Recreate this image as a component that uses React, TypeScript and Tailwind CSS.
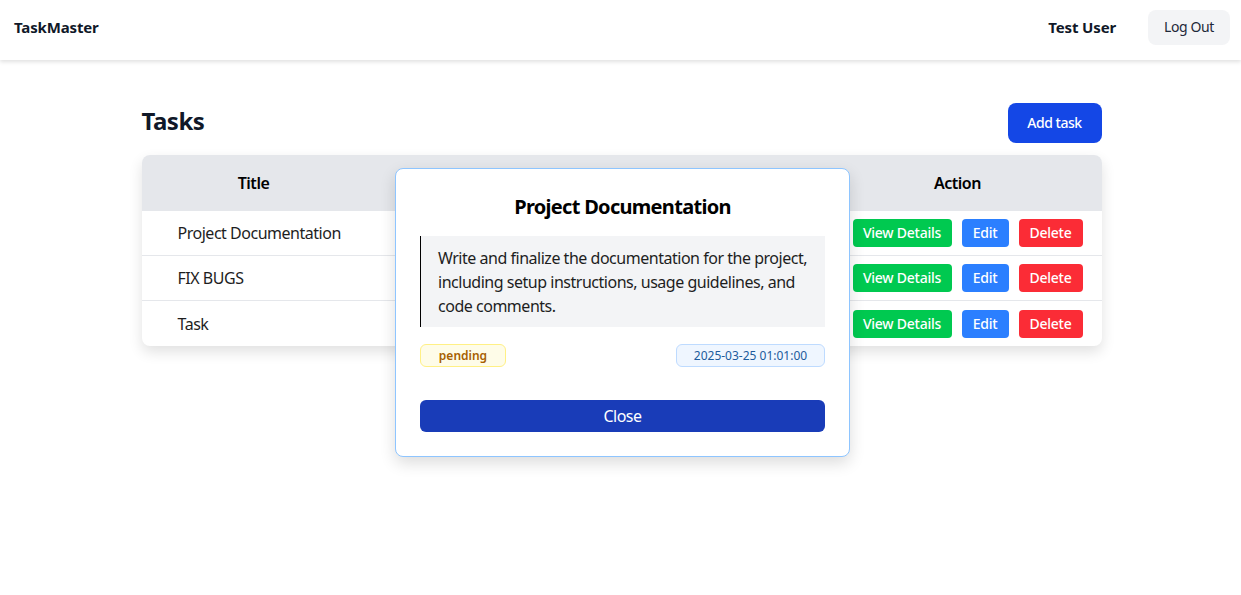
import React from "react";

const rows = ["Project Documentation", "FIX BUGS", "Task"];

export default function App() {
  return (
    <div className="relative min-h-[595px] bg-white text-[#101828]" style={{ fontFamily: '"Noto Sans", "Open Sans", sans-serif' }}>
      <nav className="flex h-[60px] items-center justify-between pb-[6px] pl-[14px] pr-[11px] shadow-[0_2px_4px_rgba(0,0,0,0.12)]">
        <div className="text-[15px] font-bold tracking-[-0.01em]">TaskMaster</div>
        <div className="flex items-center gap-8">
          <span className="text-[15px] font-bold tracking-[-0.01em]">Test User</span>
          <button className="h-[35px] w-[82px] rounded-lg bg-[#f3f4f6] text-sm tracking-[-0.03em] text-[#1e2939]">Log Out</button>
        </div>
      </nav>

      <main className="mx-auto mt-[43px] w-[960px] translate-x-[1px] tracking-[-0.03em]">
        <div className="flex items-center justify-between">
          <h1 className="-mt-1 text-2xl font-bold">Tasks</h1>
          <button className="h-10 w-[94px] rounded-lg bg-[#1447e6] text-sm font-medium text-white">Add task</button>
        </div>
        <div className="mt-3 overflow-hidden rounded-lg shadow-[0_6px_14px_rgba(0,0,0,0.12)]">
          <div className="grid h-14 grid-cols-[224px_224px_224px_288px] items-center bg-[#e5e7eb] font-semibold text-black">
            <div className="text-center">Title</div>
            <div className="text-center">Description</div>
            <div className="text-center">Status</div>
            <div className="text-center">Action</div>
          </div>
          {rows.map((r, i) => (
            <div key={r} className={`grid h-[45px] grid-cols-[224px_224px_224px_288px] items-center ${i < 2 ? "border-b border-[#e5e7eb]" : ""}`}>
              <div className="pl-9 text-[#1e1e1e]">{r}</div>
              <div></div>
              <div></div>
              <div className="flex gap-[10px] pl-[39px] tracking-[-0.015em]">
                <button className="h-7 w-[99px] rounded bg-[#00c950] text-sm font-medium text-white">View Details</button>
                <button className="h-7 w-[47px] rounded bg-[#2b7fff] text-sm font-medium text-white">Edit</button>
                <button className="h-7 w-16 rounded bg-[#fb2c36] text-sm font-medium text-white">Delete</button>
              </div>
            </div>
          ))}
        </div>
      </main>

      <div className="absolute left-[395px] top-[168px] w-[455px] rounded-lg border border-[#8ec5ff] bg-white px-6 pb-6 pt-[25px] tracking-[-0.03em] shadow-[0_6px_16px_rgba(0,0,0,0.14)]">
        <h2 className="-mt-[1px] text-center text-xl font-bold leading-7 tracking-[-0.035em] text-black">Project Documentation</h2>
        <div className="mt-[15px] border-l border-black bg-[#f3f4f6] pb-[9px] pl-[17px] pr-4 pt-[10px] leading-6 text-[#1e1e1e]">
          Write and finalize the documentation for the project, including setup instructions, usage guidelines, and code comments.
        </div>
        <div className="mt-[17px] flex items-center justify-between tracking-normal">
          <span className="flex h-[23px] w-[86px] items-center justify-center rounded-md border border-[#fff085] bg-[#fefce8] text-xs font-semibold text-[#a65f00]">pending</span>
          <span className="flex h-[23px] w-[149px] items-center justify-center rounded-md border border-[#bedbff] bg-[#eff6ff] text-xs text-[#1c5b9c]">2025-03-25 01:01:00</span>
        </div>
        <button className="mt-[33px] h-8 w-full rounded-md bg-[#193cb8] text-white">Close</button>
      </div>
    </div>
  );
}
